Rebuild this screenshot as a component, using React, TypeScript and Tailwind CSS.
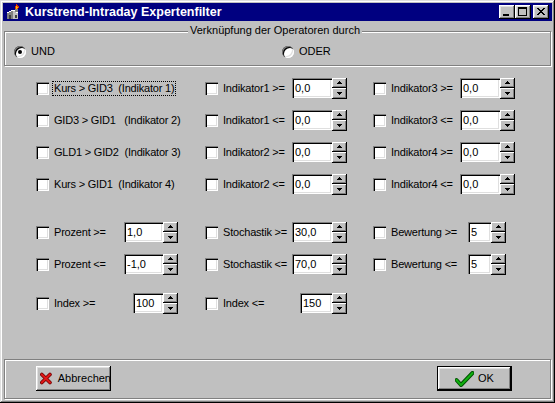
import React from "react";

const FONT = "font-['Liberation_Sans',Arial,sans-serif]";
const WINDOW =
  "shadow-[inset_-1px_-1px_#000,inset_1px_1px_#dfdfdf,inset_-2px_-2px_#808080,inset_2px_2px_#fff]";
const RAISED =
  "shadow-[inset_-1px_-1px_#000,inset_1px_1px_#fff,inset_-2px_-2px_#808080,inset_2px_2px_#dfdfdf]";
const SUNKEN =
  "shadow-[inset_1px_1px_#808080,inset_2px_2px_#000,inset_-1px_-1px_#fff,inset_-2px_-2px_#dfdfdf]";
const SMALL = "shadow-[inset_-1px_-1px_#000,inset_1px_1px_#fff,inset_-2px_-2px_#808080]";
const ETCHED = "border border-[#808080] shadow-[inset_1px_1px_#fff,1px_1px_#fff]";

function AppIcon() {
  return (
    <svg width="16" height="16" viewBox="0 0 16 16" shapeRendering="crispEdges">
      <polygon points="2,15 2,9 8,6 8,15" fill="#808080" />
      <polygon points="8,6 13,9 13,15 8,15" fill="#c0c0c0" />
      <polyline points="2,9 8,6 13,9" fill="none" stroke="#fff" strokeWidth="1" />
      <rect x="4" y="11" width="2" height="4" fill="#404040" />
      <rect x="10" y="11" width="2" height="3" fill="#404040" />
      <rect x="10" y="3" width="3" height="5" fill="#808080" />
      <path d="M11.5 0 C14 2 14.5 3.5 13 5 L10 5 C9 3.5 10 2 11.5 0 Z" fill="#e03000" />
      <path d="M11.5 2 C12.8 3 12.8 4 12 4.8 L11 4.8 C10.4 4 10.7 3 11.5 2 Z" fill="#ffc000" />
    </svg>
  );
}

function CapBtn({ kind, className = "" }: { kind: "min" | "max" | "close"; className?: string }) {
  return (
    <div className={`w-[16px] h-[14px] bg-[#c0c0c0] ${RAISED} relative ${className}`}>
      <svg width="16" height="14" viewBox="0 0 16 14" shapeRendering="crispEdges" className="absolute left-0 top-0">
        {kind === "min" && <rect x="4" y="9" width="6" height="2" fill="#000" />}
        {kind === "max" && (
          <g fill="#000">
            <rect x="3" y="2" width="9" height="2" />
            <rect x="3" y="4" width="1" height="7" />
            <rect x="11" y="4" width="1" height="7" />
            <rect x="3" y="10" width="9" height="1" />
          </g>
        )}
        {kind === "close" && (
          <g fill="#000">
            <rect x="4" y="3" width="2" height="1" />
            <rect x="10" y="3" width="2" height="1" />
            <rect x="5" y="4" width="2" height="1" />
            <rect x="9" y="4" width="2" height="1" />
            <rect x="6" y="5" width="4" height="1" />
            <rect x="7" y="6" width="2" height="1" />
            <rect x="6" y="7" width="4" height="1" />
            <rect x="5" y="8" width="2" height="1" />
            <rect x="9" y="8" width="2" height="1" />
            <rect x="4" y="9" width="2" height="1" />
            <rect x="10" y="9" width="2" height="1" />
          </g>
        )}
      </svg>
    </div>
  );
}

function Radio({ label, checked }: { label: string; checked?: boolean }) {
  return (
    <div className="flex items-center h-[13px]">
      <span className={`w-[12px] h-[12px] rounded-full bg-white ${SUNKEN} flex items-center justify-center shrink-0`}>
        {checked && <span className="w-[4px] h-[4px] rounded-full bg-black" />}
      </span>
      <span className="ml-[5px] leading-[13px]">{label}</span>
    </div>
  );
}

function Arrow({ up }: { up?: boolean }) {
  return (
    <svg width="5" height="3" viewBox="0 0 5 3" shapeRendering="crispEdges">
      {up ? (
        <g fill="#000">
          <rect x="2" y="0" width="1" height="1" />
          <rect x="1" y="1" width="3" height="1" />
          <rect x="0" y="2" width="5" height="1" />
        </g>
      ) : (
        <g fill="#000">
          <rect x="0" y="0" width="5" height="1" />
          <rect x="1" y="1" width="3" height="1" />
          <rect x="2" y="2" width="1" height="1" />
        </g>
      )}
    </svg>
  );
}

function Spin({ value, iw }: { value: string; iw: string }) {
  return (
    <div className="flex items-center">
      <div className={`${iw} h-[20px] bg-white ${SUNKEN} flex items-center pl-[3px] leading-[13px]`}>{value}</div>
      <div className="flex flex-col">
        <div className={`w-[15px] h-[10px] bg-[#c0c0c0] ${SMALL} flex items-center justify-center`}>
          <Arrow up />
        </div>
        <div className={`w-[15px] h-[11px] bg-[#c0c0c0] ${SMALL} flex items-center justify-center`}>
          <Arrow />
        </div>
      </div>
    </div>
  );
}

type CellProps = { label: string; lw?: string; value?: string; iw?: string; focus?: boolean };

function Cell({ label, lw = "", value, iw = "", focus }: CellProps) {
  return (
    <div className="flex items-center h-[22px]">
      <span className={`w-[13px] h-[13px] bg-white shrink-0 ${SUNKEN}`} />
      <div className={`${lw} flex items-center`}>
        <span
          className={`ml-[3px] px-[1px] whitespace-pre leading-[13px] tracking-[-0.2px] border ${
            focus ? "border-dotted border-black" : "border-transparent"
          }`}
        >
          {label}
        </span>
      </div>
      {value !== undefined && <Spin value={value} iw={iw} />}
    </div>
  );
}

const topRows: CellProps[][] = [
  [
    { label: "Kurs > GID3  (Indikator 1)", focus: true },
    { label: "Indikator1 >=", lw: "w-[74px]", value: "0,0", iw: "w-[40px]" },
    { label: "Indikator3 >=", lw: "w-[74px]", value: "0,0", iw: "w-[40px]" },
  ],
  [
    { label: "GID3 > GID1   (Indikator 2)" },
    { label: "Indikator1 <=", lw: "w-[74px]", value: "0,0", iw: "w-[40px]" },
    { label: "Indikator3 <=", lw: "w-[74px]", value: "0,0", iw: "w-[40px]" },
  ],
  [
    { label: "GLD1 > GID2  (Indikator 3)" },
    { label: "Indikator2 >=", lw: "w-[74px]", value: "0,0", iw: "w-[40px]" },
    { label: "Indikator4 >=", lw: "w-[74px]", value: "0,0", iw: "w-[40px]" },
  ],
  [
    { label: "Kurs > GID1  (Indikator 4)" },
    { label: "Indikator2 <=", lw: "w-[74px]", value: "0,0", iw: "w-[40px]" },
    { label: "Indikator4 <=", lw: "w-[74px]", value: "0,0", iw: "w-[40px]" },
  ],
];

const lowRows: CellProps[][] = [
  [
    { label: "Prozent >=", lw: "w-[75px]", value: "1,0", iw: "w-[39px]" },
    { label: "Stochastik >=", lw: "w-[74px]", value: "30,0", iw: "w-[40px]" },
    { label: "Bewertung >=", lw: "w-[82px]", value: "5", iw: "w-[23px]" },
  ],
  [
    { label: "Prozent <=", lw: "w-[75px]", value: "-1,0", iw: "w-[39px]" },
    { label: "Stochastik <=", lw: "w-[74px]", value: "70,0", iw: "w-[40px]" },
    { label: "Bewertung <=", lw: "w-[82px]", value: "5", iw: "w-[23px]" },
  ],
];

function CrossIcon() {
  return (
    <svg width="13" height="13" viewBox="0 0 13 13">
      <path d="M2 2 L11 11 M11 2 L2 11" stroke="#700000" strokeWidth="4" strokeLinecap="round" />
      <path d="M2 2 L11 11 M11 2 L2 11" stroke="#e01818" strokeWidth="2.2" strokeLinecap="round" />
    </svg>
  );
}

function CheckIcon() {
  return (
    <svg width="19" height="16" viewBox="0 0 19 16">
      <polyline points="1.5,9 6,14 17.5,2" fill="none" stroke="#005000" strokeWidth="4" strokeLinejoin="round" strokeLinecap="round" />
      <polyline points="1.5,9 6,14 17.5,2" fill="none" stroke="#10b010" strokeWidth="2" strokeLinejoin="round" strokeLinecap="round" />
    </svg>
  );
}

export default function App() {
  return (
    <div className={`w-[555px] h-[403px] bg-[#c0c0c0] p-[3px] flex flex-col ${FONT} text-[11px] text-black ${WINDOW}`}>
      <div className="h-[18px] bg-[#000080] flex items-center pl-[2px] pr-[3px] shrink-0">
        <AppIcon />
        <span className="ml-[4px] text-white font-bold text-[12.5px] flex-1 leading-[18px]">
          Kurstrend-Intraday Expertenfilter
        </span>
        <CapBtn kind="min" />
        <CapBtn kind="max" />
        <CapBtn kind="close" className="ml-[2px]" />
      </div>

      <div className={`relative mt-[10px] mx-[1px] h-[35px] shrink-0 ${ETCHED}`}>
        <span className="absolute -top-[8px] left-[183px] px-[2px] bg-[#c0c0c0] leading-[13px]">
          Verknüpfung der Operatoren durch
        </span>
        <div className="grid grid-cols-[268px_auto] pl-[9px] pt-[13px]">
          <Radio label="UND" checked />
          <Radio label="ODER" />
        </div>
      </div>

      <div className="mt-[11px] pl-[33px] grid grid-cols-[169px_168px_auto] gap-y-[10px]">
        {topRows.flat().map((c, i) => (
          <Cell key={i} {...c} />
        ))}
      </div>

      <div className="mt-[26px] pl-[33px] grid grid-cols-[169px_168px_auto] gap-y-[10px]">
        {lowRows.flat().map((c, i) => (
          <Cell key={i} {...c} />
        ))}
      </div>

      <div className="mt-[17px] pl-[33px] grid grid-cols-[169px_168px_auto]">
        <Cell label="Index >=" lw="w-[84px]" value="100" iw="w-[30px]" />
        <Cell label="Index <=" lw="w-[82px]" value="150" iw="w-[32px]" />
      </div>

      <div className={`mt-auto mx-[1px] mb-[1px] h-[40px] shrink-0 flex items-start justify-between pl-[31px] pr-[38px] pt-[6px] ${ETCHED}`}>
        <div className={`w-[75px] h-[25px] bg-[#c0c0c0] ${RAISED} flex items-center pl-[4px] overflow-hidden`}>
          <CrossIcon />
          <span className="ml-[6px] whitespace-nowrap">Abbrechen</span>
        </div>
        <div className="w-[75px] h-[25px] border border-black">
          <div className={`w-full h-full bg-[#c0c0c0] ${RAISED} flex items-center justify-center`}>
            <CheckIcon />
            <span className="ml-[4px]">OK</span>
          </div>
        </div>
      </div>
    </div>
  );
}
